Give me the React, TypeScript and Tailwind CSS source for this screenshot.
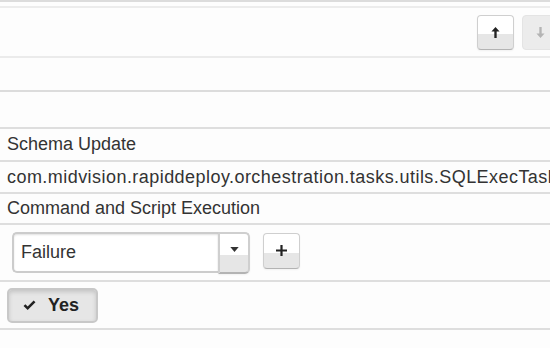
import React from "react";

function ArrowUp({ className }: { className?: string }) {
  return (
    <svg viewBox="0 0 10 12" className={className} fill="currentColor">
      <path d="M5 0 L9.5 5 L6.3 5 L6.3 12 L3.7 12 L3.7 5 L0.5 5 Z" />
    </svg>
  );
}

function ArrowDown({ className }: { className?: string }) {
  return (
    <svg viewBox="0 0 10 12" className={className} fill="currentColor">
      <path d="M5 12 L9.5 7 L6.3 7 L6.3 0 L3.7 0 L3.7 7 L0.5 7 Z" />
    </svg>
  );
}

const btn =
  "flex items-center justify-center rounded-[4px] border border-[#cfcfcf] border-b-[#b3b3b3] bg-[linear-gradient(to_bottom,#ffffff_0%,#ffffff_55%,#e6e6e6_55%,#e6e6e6_100%)] shadow-[inset_0_1px_0_rgba(255,255,255,0.2),0_1px_2px_rgba(0,0,0,0.05)]";

export default function App() {
  return (
    <div
      className="w-[550px] h-[348px] overflow-hidden bg-[#fdfdfd] text-[#333333]"
      style={{ fontFamily: '"Liberation Sans", Arial, sans-serif' }}
    >
      <div className="w-[590px]">
        <div className="h-[8px] border-t-2 border-b-2 border-t-[#dcdcdc] border-b-[#ececec]" />

        {/* sort buttons */}
        <div className="h-[50px] flex items-center justify-end gap-2 pr-[31px] border-b-2 border-[#ebebeb]">
          <button className={`${btn} w-[37px] h-[35px] text-[#222]`}>
            <ArrowUp className="w-[9px] h-[11px]" />
          </button>
          <button className="flex items-center justify-center w-[37px] h-[35px] rounded-[4px] border border-[#e4e4e4] bg-[#ececec] text-[#b4b4b4]">
            <ArrowDown className="w-[9px] h-[11px]" />
          </button>
        </div>

        <div className="h-[34px] border-b-2 border-[#dcdcdc]" />
        <div className="h-[37px] border-b-2 border-[#dedede]" />

        <div className="h-[33px] flex items-center pl-[7px] text-[18px] border-b-2 border-[#dedede]">
          Schema Update
        </div>
        <div className="h-[32px] flex items-center pl-[7px] text-[18px] tracking-[0.45px] whitespace-nowrap border-b-2 border-[#dedede]">
          com.midvision.rapiddeploy.orchestration.tasks.utils.SQLExecTask
        </div>
        <div className="h-[31px] flex items-center pl-[7px] text-[18px] border-b-2 border-[#dedede]">
          Command and Script Execution
        </div>

        {/* select row */}
        <div className="h-[57px] flex items-center pl-[12px] gap-[13px] border-b-2 border-[#dedede]">
          <div className="flex items-stretch w-[238px] h-[41px]">
            <div className="flex-1 flex items-center pl-[7px] text-[18px] bg-white border-2 border-r-0 border-[#cccccc] rounded-l-[5px] shadow-[inset_0_1px_2px_rgba(0,0,0,0.12)]">
              Failure
            </div>
            <div className={`${btn} w-[32px] -mb-[1px] border-2 rounded-l-none rounded-r-[5px] items-start pt-[13px]`}>
              <svg viewBox="0 0 10 6" className="w-[9px] h-[5px] text-[#333]" fill="currentColor">
                <path d="M0 0 L10 0 L5 6 Z" />
              </svg>
            </div>
          </div>
          <button className={`${btn} w-[37px] h-[36px] -mt-[4px] text-[#222]`}>
            <svg viewBox="0 0 12 12" className="w-[11px] h-[11px]" fill="currentColor">
              <path d="M4.8 0 H7.2 V4.8 H12 V7.2 H7.2 V12 H4.8 V7.2 H0 V4.8 H4.8 Z" />
            </svg>
          </button>
        </div>

        {/* toggle row */}
        <div className="h-[48px] flex items-center pl-[7px] border-b-2 border-[#dedede]">
          <button className="flex items-center gap-[12px] w-[91px] h-[35px] pl-[14px] rounded-[5px] border-2 border-[#c8c8c8] bg-[#e6e6e6] shadow-[inset_0_2px_4px_rgba(0,0,0,0.15)] text-[18px] font-bold text-[#222]">
            <svg viewBox="0 0 14 12" className="w-[13px] h-[11px]" fill="currentColor">
              <path d="M0.5 6.5 L2.5 4.5 L5 7 L11.5 0.5 L13.5 2.5 L5 11 Z" />
            </svg>
            Yes
          </button>
        </div>
      </div>
    </div>
  );
}
